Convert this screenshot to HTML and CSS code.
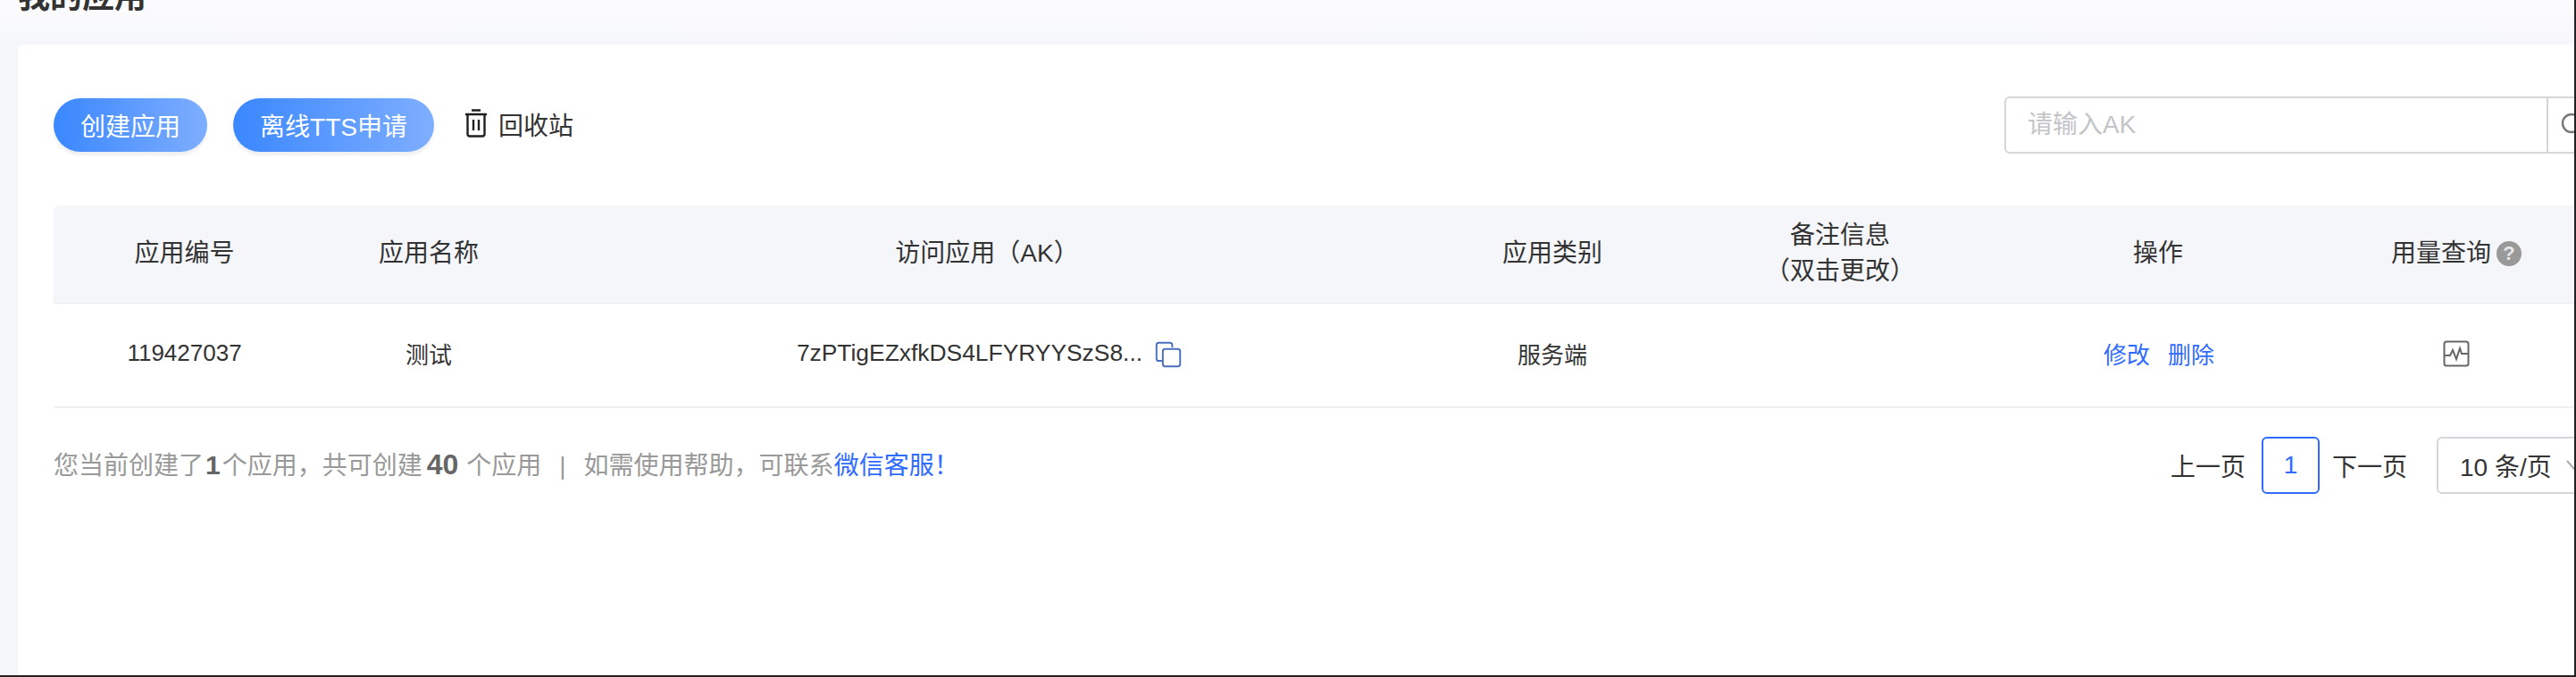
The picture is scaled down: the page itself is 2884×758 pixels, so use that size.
FILE: index.html
```html
<!DOCTYPE html>
<html lang="zh-CN">
<head>
    <meta charset="UTF-8">
    <title>我的应用</title>
    <link rel="stylesheet" href="styles.css">
</head>
<body>
    <div class="page">
        <h1 class="page-title">我的应用</h1>

        <div class="card">
            <!-- 工具栏 -->
            <div class="toolbar">
                <button class="btn-primary btn-create">创建应用</button>
                <button class="btn-primary btn-tts">离线TTS申请</button>
                <div class="recycle">
                    <svg class="recycle-icon" viewBox="0 0 26 32" fill="none" stroke="#1f1f1f" stroke-width="2.4">
                        <path d="M8 1.5h10M1 6h24M3.5 6v22a2.5 2.5 0 0 0 2.5 2.5h14a2.5 2.5 0 0 0 2.5-2.5V6M10 12v12M16 12v12"/>
                    </svg>
                    <span>回收站</span>
                </div>
                <div class="search">
                    <div class="search-input">请输入AK</div>
                    <div class="search-btn">
                        <svg class="search-icon" viewBox="0 0 28 28" fill="none" stroke="#777" stroke-width="2.4">
                            <circle cx="12" cy="12" r="10"/>
                            <path d="M19 19l7 7"/>
                        </svg>
                    </div>
                </div>
            </div>

            <!-- 应用列表 -->
            <div class="table">
                <div class="table-row table-head">
                    <div>应用编号</div>
                    <div>应用名称</div>
                    <div class="ak-head">访问应用（AK）</div>
                    <div>应用类别</div>
                    <div>备注信息<br>（双击更改）</div>
                    <div>操作</div>
                    <div class="usage-head">
                        用量查询
                        <span class="help">?</span>
                    </div>
                </div>
                <div class="table-row table-body">
                    <div>119427037</div>
                    <div>测试</div>
                    <div class="ak-cell">
                        <span class="ak-text">7zPTigEZxfkDS4LFYRYYSzS8...</span>
                        <svg class="copy-icon" viewBox="0 0 34 34" fill="none" stroke="#4a6fc0" stroke-width="2.2">
                            <path d="M9 25H5a3 3 0 0 1-3-3V5a3 3 0 0 1 3-3h14a3 3 0 0 1 3 3v3"/>
                            <rect x="10" y="10" width="22" height="22" rx="3"/>
                        </svg>
                    </div>
                    <div>服务端</div>
                    <div></div>
                    <div class="actions">
                        <a>修改</a>
                        <a>删除</a>
                    </div>
                    <div>
                        <svg class="chart-icon" viewBox="0 0 30 30" fill="none" stroke="#666" stroke-width="2">
                            <rect x="1.5" y="1.5" width="27" height="27" rx="2.5"/>
                            <path d="M2 17h6l3-6 4 10 4-12 2 6h7"/>
                        </svg>
                    </div>
                </div>
            </div>

            <!-- 底部信息和分页 -->
            <div class="footer">
                <div class="summary">
                    您当前创建了<b>1</b>个应用，共可创建<b class="total">40</b>个应用<span class="sep">|</span>如需使用帮助，可联系<a>微信客服！</a>
                </div>
                <div class="pager">
                    <span>上一页</span>
                    <span class="page-num">1</span>
                    <span>下一页</span>
                    <div class="page-size">
                        <span>10 条/页</span>
                        <svg class="arrow-icon" viewBox="0 0 20 12" fill="none" stroke="#aaa" stroke-width="2">
                            <path d="M1 1l9 10 9-10"/>
                        </svg>
                    </div>
                </div>
            </div>
        </div>
    </div>
</body>
</html>
```

FILE: styles.css
```css
* {
    box-sizing: border-box;
}
html, body {
    margin: 0;
    padding: 0;
    height: 100%;
}
body {
    font-family: "Liberation Sans", "Noto Sans CJK SC", sans-serif;
    font-size: 26px;
    color: #333;
    overflow: hidden;
}
.page {
    height: 758px;
    width: 2884px;
    padding-left: 20px;
    overflow: hidden;
    border-right: 2px solid #222;
    border-bottom: 2px solid #222;
    background: linear-gradient(#fcfcfe, #f5f6fa 60px);
}
.page-title {
    margin: -28px 0 0;
    height: 78px;
    font-size: 36px;
    line-height: 50px;
    font-weight: 700;
    color: #333;
}
.card {
    width: 2900px;
    height: 720px;
    padding: 58px 0 0 40px;
    background-color: #fff;
    border-radius: 6px 0 0 0;
}
.toolbar {
    display: flex;
    align-items: center;
    width: 2854px;
    height: 64px;
    margin-bottom: 58px;
    font-size: 28px;
}
.btn-primary {
    height: 60px;
    padding: 0;
    font-family: inherit;
    font-size: 28px;
    color: #fff;
    border: none;
    border-radius: 30px;
    background: linear-gradient(90deg, #3a87ff, #7eaeff);
    box-shadow: 0 4px 3px #f0f0f3;
}
.btn-create {
    width: 172px;
    margin-right: 29px;
}
.btn-tts {
    width: 225px;
    margin-right: 34px;
}
.recycle {
    display: flex;
    align-items: center;
    gap: 12px;
    color: #333;
    padding-bottom: 2px;
}
.recycle-icon {
    width: 26px;
    height: 32px;
    margin-bottom: 2px;
}
.search {
    display: flex;
    width: 670px;
    height: 64px;
    margin-left: auto;
    border: 2px solid #d5d6dc;
    border-radius: 6px 0 0 6px;
}
.search-input {
    flex: 1;
    padding-left: 24px;
    line-height: 60px;
    color: #c4c4c8;
}
.search-btn {
    display: flex;
    align-items: center;
    width: 61px;
    padding-left: 14px;
    border-left: 2px solid #d5d6dc;
}
.search-icon {
    width: 28px;
    height: 28px;
}
.table-row {
    display: grid;
    grid-template-columns: 293px 254px 986px 290px 354px 358px 310px;
    align-items: center;
    text-align: center;
}
.table {
    width: 2845px;
}
.table-head {
    height: 110px;
    padding-bottom: 2px;
    font-size: 28px;
    line-height: 40px;
    background-color: #f5f6fa;
    border-radius: 6px 0 0 0;
    border-bottom: 1px solid #ececf0;
}
.ak-head {
    padding-left: 10px;
}
.table-body {
    height: 117px;
    padding-bottom: 4px;
    border-bottom: 2px solid #f0f0f0;
}
.usage-head {
    display: flex;
    align-items: center;
    justify-content: center;
    gap: 6px;
}
.help {
    width: 28px;
    height: 28px;
    font-size: 22px;
    line-height: 28px;
    font-weight: 700;
    color: #e8e8e8;
    background-color: #999;
    border-radius: 50%;
}
.ak-cell {
    display: flex;
    align-items: center;
    justify-content: center;
    gap: 14px;
    padding-left: 15px;
}
.ak-text {
    font-size: 26.4px;
}
.copy-icon {
    width: 30px;
    height: 30px;
    margin-top: 2px;
}
.actions {
    display: flex;
    justify-content: center;
    gap: 20px;
    padding-left: 2px;
}
.actions a, .summary a {
    color: #2f6bff;
}
.chart-icon {
    display: block;
    width: 30px;
    height: 30px;
    margin: 0 auto;
}
.footer {
    display: flex;
    align-items: center;
    justify-content: space-between;
    width: 2846px;
    padding-top: 32px;
    font-size: 28px;
}
.summary {
    color: #999;
    margin-bottom: 4px;
}
.summary b {
    margin: 0 2px;
    font-size: 30px;
    line-height: 1;
    color: #666;
}
.summary .total {
    margin: 0 9px 0 5px;
    font-size: 32px;
}
.sep {
    margin: 0 20px;
}
.pager {
    display: flex;
    align-items: center;
}
.page-num {
    width: 65px;
    height: 64px;
    margin: 0 14px 0 18px;
    line-height: 60px;
    text-align: center;
    color: #2f6bff;
    border: 2px solid #2f6bff;
    border-radius: 6px;
}
.page-size {
    display: flex;
    align-items: center;
    width: 178px;
    height: 64px;
    margin-left: 33px;
    padding-left: 24px;
    border: 2px solid #d5d6dc;
    border-radius: 6px 0 0 6px;
}
.page-size span {
    flex-shrink: 0;
}
.arrow-icon {
    flex-shrink: 0;
    width: 20px;
    height: 12px;
    margin-left: 16px;
}
```
